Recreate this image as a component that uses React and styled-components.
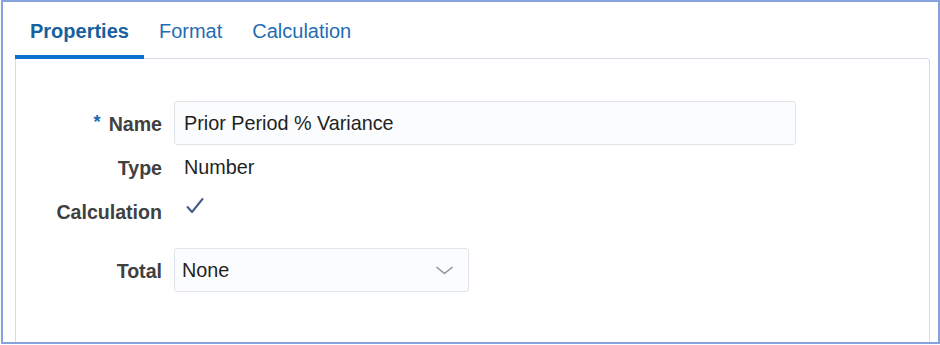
import React from "react";
import styled, { createGlobalStyle } from "styled-components";

const Global = createGlobalStyle`
  html, body { margin: 0; padding: 0; background: #ffffff; }
  body { font-family: "Liberation Sans", Arial, sans-serif; }
  * { box-sizing: border-box; }
`;

const Frame = styled.div`
  width: 939px;
  height: 344px;
  margin-left: 1px;
  border: 2px solid #86a3de;
  background: #ffffff;
  overflow: hidden;
  padding: 18px 8px 0 12px;
  display: flex;
  flex-direction: column;
`;

const TabBar = styled.div`
  display: flex;
  position: relative;
  z-index: 1;
  margin-bottom: -1px;
`;

const Tab = styled.div`
  padding: 0 15px 13px 15px;
  font-size: 20px;
  line-height: 22px;
  font-weight: ${(p) => (p.$active ? 700 : 400)};
  color: ${(p) => (p.$active ? "#17619f" : "#1f6db2")};
  border-bottom: 4px solid ${(p) => (p.$active ? "#0d70d0" : "transparent")};
`;

const Panel = styled.div`
  flex: 1;
  border: 1px solid #d3dce7;
  border-bottom: none;
  border-radius: 0 4px 0 0;
  padding: 42px 0 0 0;
  display: flex;
  flex-direction: column;
`;

const Row = styled.div`
  display: grid;
  grid-template-columns: 146px 1fr;
  column-gap: 12px;
  align-items: center;
  min-height: 44px;
  margin-top: ${(p) => (p.$spaced ? "15px" : "0")};
`;

const Label = styled.div`
  text-align: right;
  font-size: 19.6px;
  font-weight: 700;
  color: #404040;
  white-space: nowrap;
  padding-top: 2px;
`;

const Required = styled.span`
  color: #1a6bb3;
  font-size: 18px;
  position: relative;
  top: -3px;
  margin-right: 8px;
`;

const TextInput = styled.div`
  width: 622px;
  height: 44px;
  border: 1px solid #dfe4ea;
  border-radius: 3px;
  background: #fbfcfd;
  padding: 0 9px;
  display: flex;
  align-items: center;
  font-size: 19.8px;
  color: #1f1f1f;
`;

const Value = styled.div`
  padding-left: 10px;
  font-size: 19.8px;
  color: #1f1f1f;
`;

const CheckWrap = styled.div`
  padding-left: 12px;
  display: flex;
  align-items: center;
  margin-top: -10px;
`;

const Select = styled.div`
  width: 295px;
  height: 44px;
  border: 1px solid #dfe4ea;
  border-radius: 3px;
  background: #fbfcfd;
  padding: 0 15px 0 7px;
  display: flex;
  align-items: center;
  justify-content: space-between;
  font-size: 19.8px;
  color: #1f1f1f;
`;

const Check = () => (
  <svg width="18" height="18" viewBox="0 0 18 18">
    <path d="M1.5 10 L6 15 L16.5 2" fill="none" stroke="#46598c" strokeWidth="2" strokeLinecap="round" strokeLinejoin="round" />
  </svg>
);

const Chevron = () => (
  <svg width="17" height="9" viewBox="0 0 17 9">
    <path d="M1 1.5 L8.5 7.5 L16 1.5" fill="none" stroke="#8d9299" strokeWidth="1.6" strokeLinecap="round" strokeLinejoin="round" />
  </svg>
);

export default function App() {
  return (
    <>
      <Global />
      <Frame>
        <TabBar>
          <Tab $active>Properties</Tab>
          <Tab>Format</Tab>
          <Tab>Calculation</Tab>
        </TabBar>
        <Panel>
          <Row>
            <Label>
              <Required>*</Required>Name
            </Label>
            <TextInput>Prior Period % Variance</TextInput>
          </Row>
          <Row>
            <Label>Type</Label>
            <Value>Number</Value>
          </Row>
          <Row>
            <Label>Calculation</Label>
            <CheckWrap>
              <Check />
            </CheckWrap>
          </Row>
          <Row $spaced>
            <Label>Total</Label>
            <Select>
              <span>None</span>
              <Chevron />
            </Select>
          </Row>
        </Panel>
      </Frame>
    </>
  );
}
